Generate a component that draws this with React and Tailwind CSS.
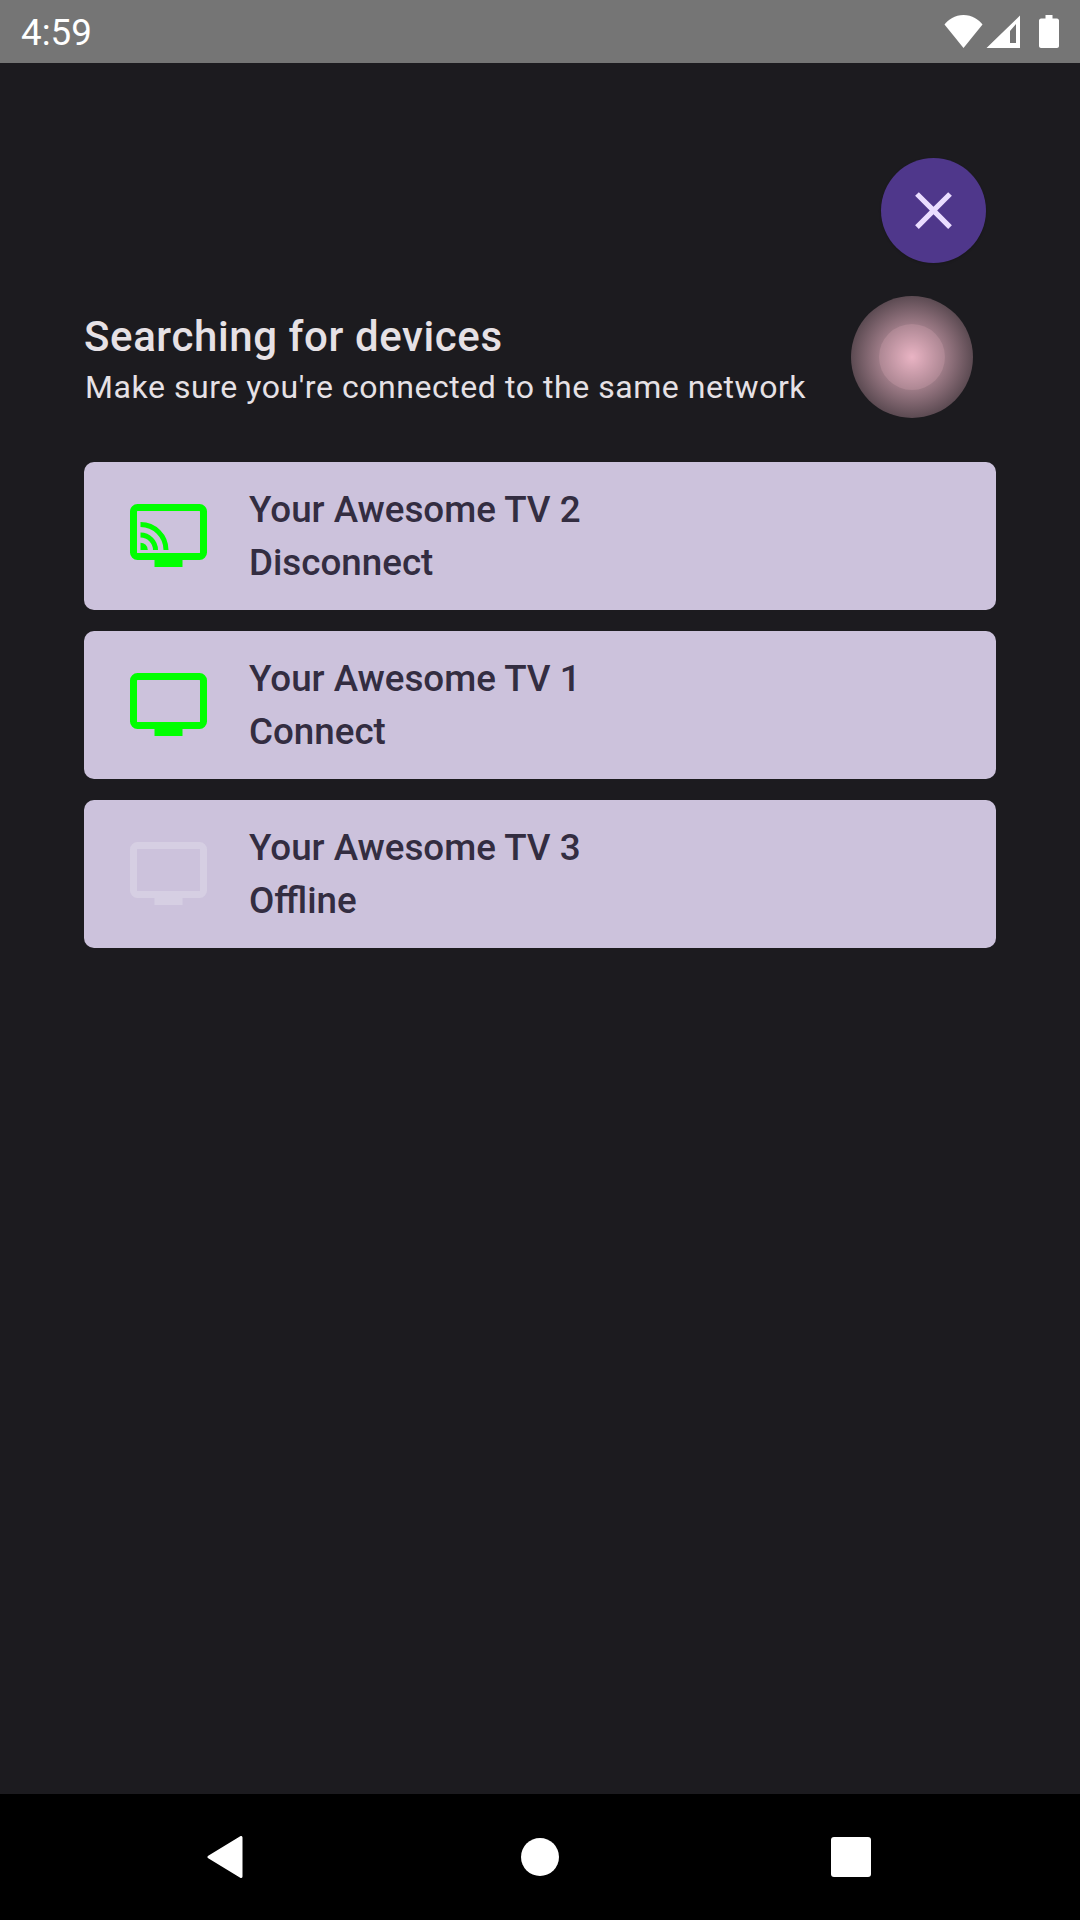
const DEVICES = [
  { name: 'Your Awesome TV 2', action: 'Disconnect', color: '#00ff00', casting: true },
  { name: 'Your Awesome TV 1', action: 'Connect', color: '#00ff00' },
  { name: 'Your Awesome TV 3', action: 'Offline', color: '#d6cfe3' },
];

function TvIcon({ color, casting }) {
  return (
    <svg width="77" height="63" viewBox="0 0 77 63" className="shrink-0">
      <rect x="3.500" y="3.500" width="70" height="49" rx="4" fill="none" stroke={color} strokeWidth="7" />
      <rect x="24.500" y="56" width="28" height="7" fill={color} />
      {casting && (
        <g fill="none" stroke={color}>
          <path d="M10.500 20.500A25.500 25.500 0 0 1 36 46" strokeWidth="5" />
          <path d="M10.500 31A15 15 0 0 1 25.500 46" strokeWidth="5" />
          <path d="M10.500 38.700A7.300 7.300 0 0 1 17.800 46H10.500Z" fill={color} stroke="none" />
        </g>
      )}
    </svg>
  );
}

function DeviceCard({ device }) {
  return (
    <div className="flex h-[148px] items-center rounded-[10px] bg-[#ccc2dc] pb-px pl-[45.5px]">
      <TvIcon color={device.color} casting={device.casting} />
      <div className="ml-[42.5px] flex flex-col text-[36.75px] leading-[53px] font-[480] text-[#332d41]">
        <span>{device.name}</span>
        <span>{device.action}</span>
      </div>
    </div>
  );
}

export default function App() {
  return (
    <div className="flex h-[1920px] w-[1080px] flex-col bg-[#1c1b1f] font-['Roboto',sans-serif]">
      {/* status bar */}
      <div className="flex h-[63px] items-center bg-[#757575] px-[21px] text-white">
        <span className="pt-[3px] text-[36.75px] leading-none">4:59</span>
        <div className="ml-auto flex items-center">
          <svg width="39" height="33" viewBox="0 0 39 33">
            <path d="M19.500 33 0.500 9.500C4 5 11 0 19.500 0S35 5 38.500 9.500Z" fill="#fff" />
          </svg>
          <svg width="35" height="33" viewBox="0 0 35 33" className="ml-[2px]">
            <path fillRule="evenodd" d="M35 0.500V33H1.500ZM31 9 25 16V28H31Z" fill="#fff" />
          </svg>
          <svg width="20" height="33" viewBox="0 0 20 33" className="ml-[19px]">
            <path d="M6.500 0H13.500V3.500H18C19 3.500 20 4.500 20 5.500V31C20 32 19 33 18 33H2C1 33 0 32 0 31V5.500C0 4.500 1 3.500 2 3.500H6.500Z" fill="#fff" />
          </svg>
        </div>
      </div>

      <div className="flex flex-1 flex-col px-[84px] pt-[95px]">
        <button className="mr-[10px] flex h-[105px] w-[105px] items-center justify-center self-end rounded-full bg-[#4f378b] text-[#eaddff] shadow-sm">
          <svg width="63" height="63" viewBox="0 0 24 24" fill="currentColor">
            <path d="M19 6.410L17.590 5 12 10.590 6.410 5 5 6.410 10.590 12 5 17.590 6.410 19 12 13.410 17.590 19 19 17.590 13.410 12z" />
          </svg>
        </button>

        <div className="mt-[32px] flex h-[123px] items-center">
          <div className="mt-[4px] flex flex-col">
            <span className="text-[42px] leading-[56px] font-[480] tracking-[0.6px] text-[#e6e1e5]">Searching for devices</span>
            <span className="ml-px text-[32px] leading-[44px] tracking-[0.55px] text-[#e6e1e5]">Make sure you're connected to the same network</span>
          </div>
          <div className="ml-auto mr-[23px] flex h-[122px] w-[122px] items-center justify-center rounded-full bg-[radial-gradient(circle_closest-side,#e8b3c3_0%,#efb8c84d_100%)]">
            <div className="h-[66px] w-[66px] rounded-full bg-[#efb8c8]/20" />
          </div>
        </div>

        <div className="mt-[44px] flex flex-col gap-[21px]">
          {DEVICES.map((device) => (
            <DeviceCard key={device.name} device={device} />
          ))}
        </div>
      </div>

      {/* nav bar */}
      <div className="flex h-[126px] items-center bg-black pl-[207px]">
        <svg width="36" height="42" viewBox="0 0 36 42">
          <path d="M34 1.500V40.500L2 21Z" fill="#fff" stroke="#fff" strokeWidth="3" strokeLinejoin="round" />
        </svg>
        <div className="ml-[278px] h-[38px] w-[38px] rounded-full bg-white" />
        <div className="ml-[272px] h-[40px] w-[40px] rounded-[3px] bg-white" />
      </div>
    </div>
  );
}
